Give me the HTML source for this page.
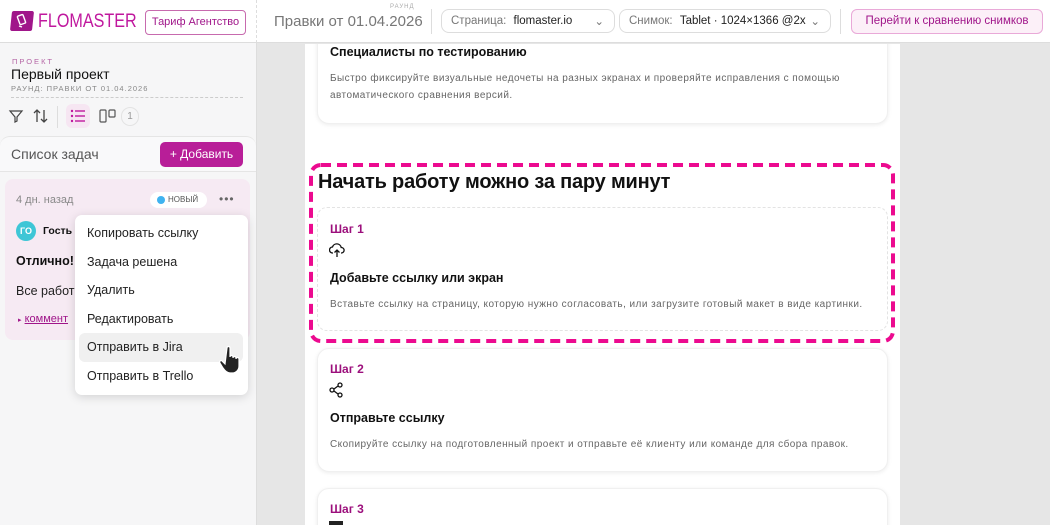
<!DOCTYPE html>
<html style="overflow:hidden;width:1050px;height:525px"><head><meta charset="utf-8"><style>
*{box-sizing:border-box;margin:0;padding:0}
html,body{overflow:hidden}
body{width:1050px;height:525px;font-family:"Liberation Sans","Noto Sans CJK SC",sans-serif;background:#e6e6e6;position:relative;color:#111}
.abs{position:absolute}
#hdr{left:0;top:0;width:1050px;height:43px;background:#fff;border-bottom:1px solid #ddd}
#side{left:0;top:43px;width:257px;height:482px;background:#f6f6f7;border-right:1px solid #ddd}
.sel{border:1px solid #ddd;border-radius:8px;height:24px;top:9px;font-size:11.5px;color:#777;padding:5px 9px;white-space:nowrap}
.sel b{font-weight:normal;color:#222;margin-left:4px}
.card{background:#fff;border-radius:12px;box-shadow:0 1px 4px rgba(0,0,0,.08);border:1px solid #f0f0f0}
.step{font-size:12px;color:#9c0f7c;font-weight:bold}
.h{font-size:12.5px;font-weight:bold;color:#111}
.p{font-size:10px;color:#666;letter-spacing:.45px}
.mi{position:absolute;left:12px;font-size:12.5px;color:#222}
</style></head><body>
<!-- main page (clipped) -->
<div class="abs" style="left:0;top:44px;width:1050px;height:481px;overflow:hidden">
<div class="abs" style="left:0;top:-44px;width:1050px;height:525px">
<div class="abs" style="left:305px;top:44px;width:595px;height:481px;background:#fff"></div>
<div class="abs card" style="left:317px;top:20px;width:571px;height:104px"></div>
<div class="abs h" style="left:330px;top:45px">Специалисты по тестированию</div>
<div class="abs p" style="left:330px;top:70px;width:550px;line-height:17px">Быстро фиксируйте визуальные недочеты на разных экранах и проверяйте исправления с помощью автоматического сравнения версий.</div>
<div class="abs" style="left:318px;top:171px;font-size:20px;font-weight:bold;color:#111;letter-spacing:-.2px">Начать работу можно за пару минут</div>
<div class="abs" style="left:317px;top:207px;width:571px;height:124px;border:1px dashed #e3e3e3;border-radius:10px"></div>
<svg class="abs" style="left:308px;top:162px" width="588" height="182"><rect x="3" y="3" width="582" height="176" rx="10" fill="none" stroke="#ec0a8f" stroke-width="4" stroke-dasharray="10 6"/></svg>
<div class="abs step" style="left:330px;top:222px">Шаг 1</div>
<svg class="abs" style="left:329px;top:242px" width="16" height="16" viewBox="0 0 16 16"><path d="M4 11H3.5a3 3 0 0 1 0-6 4.5 4.5 0 0 1 8.7 0.5A2.5 2.5 0 0 1 12.5 11H12M8 15V8M5.5 10.5L8 8l2.5 2.5" fill="none" stroke="#111" stroke-width="1.3"/></svg>
<div class="abs h" style="left:330px;top:271px">Добавьте ссылку или экран</div>
<div class="abs p" style="left:330px;top:299px">Вставьте ссылку на страницу, которую нужно согласовать, или загрузите готовый макет в виде картинки.</div>
<div class="abs card" style="left:317px;top:348px;width:571px;height:124px"></div>
<div class="abs step" style="left:330px;top:362px">Шаг 2</div>
<svg class="abs" style="left:329px;top:382px" width="14" height="16" viewBox="0 0 14 16"><circle cx="3" cy="8" r="2" fill="none" stroke="#111" stroke-width="1.3"/><circle cx="11" cy="3" r="2" fill="none" stroke="#111" stroke-width="1.3"/><circle cx="11" cy="13" r="2" fill="none" stroke="#111" stroke-width="1.3"/><path d="M5 7l4-3M5 9l4 3" stroke="#111" stroke-width="1.3"/></svg>
<div class="abs h" style="left:330px;top:411px">Отправьте ссылку</div>
<div class="abs p" style="left:330px;top:439px">Скопируйте ссылку на подготовленный проект и отправьте её клиенту или команде для сбора правок.</div>
<div class="abs card" style="left:317px;top:488px;width:571px;height:60px"></div>
<div class="abs step" style="left:330px;top:502px">Шаг 3</div>
<div class="abs" style="left:329px;top:521px;width:14px;height:4px;background:#222"></div>
</div></div>

<div id="hdr" class="abs"></div>
<!-- logo -->
<div class="abs" style="left:11px;top:11px;width:22px;height:20px;background:#a0168a;transform:skew(-6deg);border-radius:2px"></div>
<svg class="abs" style="left:14px;top:13px" width="16" height="16" viewBox="0 0 16 16"><rect x="5" y="2" width="6" height="9" rx="1" fill="none" stroke="#fff" stroke-width="1.4" transform="rotate(-20 8 8)"/><path d="M5 13l3 1" stroke="#fff" stroke-width="1.4"/></svg>
<div class="abs" style="left:38px;top:11px;font-size:19px;color:#c0189e;transform:scaleX(.85);transform-origin:left">FLOMASTER</div>
<div class="abs" style="left:145px;top:10px;width:101px;height:25px;border:1px solid #c76aae;border-radius:4px;font-size:11px;color:#a0168a;text-align:center;line-height:23px">Тариф Агентство</div>
<div class="abs" style="left:256px;top:0;height:43px;border-left:1px dashed #ddd"></div>
<div class="abs" style="left:390px;top:4px;font-size:6px;color:#aaa;letter-spacing:1px">РАУНД</div>
<div class="abs" style="left:274px;top:13px;font-size:15px;color:#777">Правки от 01.04.2026</div>
<div class="abs" style="left:431px;top:9px;height:25px;border-left:1px solid #ddd"></div>
<div class="abs sel" style="left:441px;width:174px">Страница: <b>flomaster.io</b><span style="position:absolute;right:10px;top:4px">⌄</span></div>
<div class="abs sel" style="left:619px;width:212px">Снимок: <b>Tablet · 1024×1366 @2x</b><span style="position:absolute;right:10px;top:4px">⌄</span></div>
<div class="abs" style="left:840px;top:9px;height:25px;border-left:1px solid #ddd"></div>
<div class="abs" style="left:851px;top:9px;width:192px;height:25px;border:1px solid #e9a9d8;background:#fcf0f8;border-radius:6px;font-size:11.5px;color:#a0168a;text-align:center;line-height:23px">Перейти к сравнению снимков</div>

<div id="side" class="abs"></div>
<div class="abs" style="left:12px;top:57px;font-size:7.5px;color:#b565a5;letter-spacing:2px">ПРОЕКТ</div>
<div class="abs" style="left:11px;top:66px;font-size:14px;color:#111">Первый проект</div>
<div class="abs" style="left:11px;top:84px;font-size:7.5px;color:#888;letter-spacing:1px">РАУНД: ПРАВКИ ОТ 01.04.2026</div>
<div class="abs" style="left:11px;top:97px;width:232px;border-top:1px dashed #ccc"></div>
<svg class="abs" style="left:8px;top:108px" width="16" height="16" viewBox="0 0 16 16"><path d="M2 3h12l-5 6v4l-2 1V9z" fill="none" stroke="#444" stroke-width="1.2"/></svg>
<svg class="abs" style="left:32px;top:108px" width="18" height="16" viewBox="0 0 18 16"><path d="M5 14V2M2 5l3-3 3 3M12 2v12M9 11l3 3 3-3" fill="none" stroke="#444" stroke-width="1.3"/></svg>
<div class="abs" style="left:57px;top:106px;height:22px;border-left:1px solid #ddd"></div>
<div class="abs" style="left:66px;top:104px;width:24px;height:24px;background:#f6e6f2;border-radius:6px"></div>
<svg class="abs" style="left:70px;top:109px" width="16" height="14" viewBox="0 0 16 14"><g fill="#c0189e"><circle cx="2" cy="2" r="1.2"/><circle cx="2" cy="7" r="1.2"/><circle cx="2" cy="12" r="1.2"/><rect x="5" y="1.3" width="10" height="1.4"/><rect x="5" y="6.3" width="10" height="1.4"/><rect x="5" y="11.3" width="10" height="1.4"/></g></svg>
<svg class="abs" style="left:99px;top:108px" width="18" height="16" viewBox="0 0 18 16"><rect x="1" y="2" width="6" height="12" rx="1" fill="none" stroke="#555" stroke-width="1.2"/><rect x="10" y="2" width="6" height="7" rx="1" fill="none" stroke="#555" stroke-width="1.2"/></svg>
<div class="abs" style="left:121px;top:107px;width:18px;height:19px;border:1px solid #e3e3e3;border-radius:9px;font-size:10px;color:#999;text-align:center;line-height:17px">1</div>
<div class="abs" style="left:0;top:136px;width:256px;height:36px;background:#f9f9fa;border-top:1px solid #e5e5e5;border-bottom:1px solid #e5e5e5;border-radius:10px 10px 0 0"></div>
<div class="abs" style="left:11px;top:146px;font-size:14px;color:#555">Список задач</div>
<div class="abs" style="left:160px;top:142px;width:83px;height:25px;background:#b81e98;border-radius:5px;color:#fff;font-size:12px;text-align:center;line-height:25px">+ Добавить</div>
<div class="abs" style="left:5px;top:179px;width:245px;height:161px;background:#f6eaf3;border-radius:8px"></div>
<div class="abs" style="left:16px;top:194px;font-size:11px;color:#888">4 дн. назад</div>
<div class="abs" style="left:150px;top:192px;width:57px;height:16px;background:#fff;border-radius:8px;font-size:8px;color:#555;line-height:16px;padding-left:18px">НОВЫЙ<span style="position:absolute;left:7px;top:4px;width:8px;height:8px;border-radius:4px;background:#3fb3f0"></span></div>
<div class="abs" style="left:219px;top:192px;font-size:12px;color:#666;letter-spacing:1px">•••</div>
<div class="abs" style="left:16px;top:221px;width:20px;height:20px;border-radius:10px;background:#3ec6d6;color:#fff;font-size:9px;font-weight:bold;text-align:center;line-height:20px">ГО</div>
<div class="abs" style="left:43px;top:225px;font-size:10.5px;font-weight:bold">Гость</div>
<div class="abs" style="left:16px;top:254px;font-size:12.5px;font-weight:bold">Отлично!</div>
<div class="abs" style="left:16px;top:284px;font-size:12.5px;color:#222">Все работ</div>
<div class="abs" style="left:18px;top:313px;font-size:11px;color:#a0168a"><span style="font-size:7px">▸</span> <u>коммент</u></div>
<div class="abs" style="left:75px;top:215px;width:173px;height:180px;background:#fff;border-radius:7px;box-shadow:0 2px 10px rgba(0,0,0,.15)">
<div class="abs" style="left:4px;top:118px;width:164px;height:29px;background:#f0f0f0;border-radius:6px"></div>
<div class="mi" style="top:11px">Копировать ссылку</div>
<div class="mi" style="top:40px">Задача решена</div>
<div class="mi" style="top:68px">Удалить</div>
<div class="mi" style="top:97px">Редактировать</div>
<div class="mi" style="top:125px">Отправить в Jira</div>
<div class="mi" style="top:154px">Отправить в Trello</div>
</div>
<svg class="abs" style="left:219px;top:345px" width="26" height="30" viewBox="0 0 26 30"><path d="M8 3c0-2 3-2 3 0v9c0-2 3-2 3 0v1c0-2 3-2 3 0v1c0-2 3-2 3 0v7c0 4-3 7-7 7h-2c-3 0-5-2-7-5l-3-5c-1-2 1-3 2-2l3 3z" fill="#222" stroke="#fff" stroke-width="1.2"/></svg>
</body></html>
